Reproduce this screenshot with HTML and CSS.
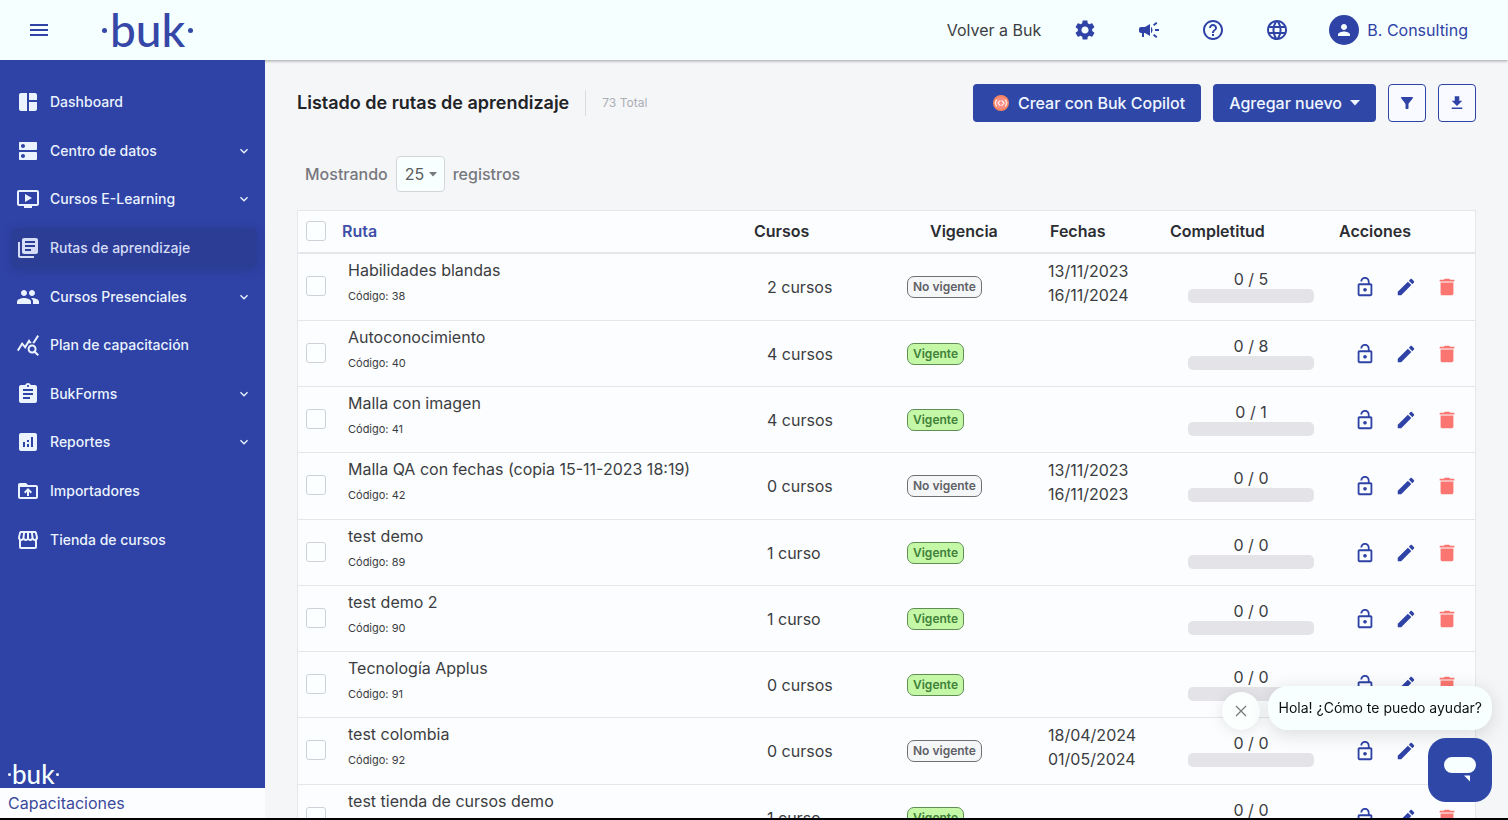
FILE: index.html
```html
<!DOCTYPE html>
<html lang="es">
<head>
<meta charset="utf-8">
<title>Listado de rutas de aprendizaje</title>
<link rel="stylesheet" href="styles.css">
</head>
<body>
<svg class="sprite" aria-hidden="true">
  <symbol id="i-menu" viewBox="0 0 24 24"><path d="M3 18h18v-2H3v2zm0-5h18v-2H3v2zm0-7v2h18V6H3z"/></symbol>
  <symbol id="i-dash" viewBox="0 0 24 24"><path d="M11 21H5c-1.100 0-2-.9-2-2V5c0-1.100.9-2 2-2h6v18zm2 0h6c1.100 0 2-.9 2-2v-7h-8v9zm8-11V5c0-1.100-.9-2-2-2h-6v7h8z"/></symbol>
  <symbol id="i-dns" viewBox="0 0 24 24"><path d="M20 13H4c-.55 0-1 .45-1 1v6c0 .55.45 1 1 1h16c.55 0 1-.45 1-1v-6c0-.55-.45-1-1-1zM7 19c-1.100 0-2-.9-2-2s.9-2 2-2 2 .9 2 2-.9 2-2 2zM20 3H4c-.55 0-1 .45-1 1v6c0 .55.45 1 1 1h16c.55 0 1-.45 1-1V4c0-.55-.45-1-1-1zM7 9c-1.100 0-2-.9-2-2s.9-2 2-2 2 .9 2 2-.9 2-2 2z"/></symbol>
  <symbol id="i-video" viewBox="0 0 24 24"><path d="M21 3H3c-1.110 0-2 .89-2 2v12c0 1.100.89 2 2 2h5v2h8v-2h5c1.100 0 1.990-.9 1.990-2L23 5c0-1.110-.9-2-2-2zm0 14H3V5h18v12zm-5-6l-7 4V7z"/></symbol>
  <symbol id="i-books" viewBox="0 0 24 24"><path d="M4 6H2v14c0 1.100.9 2 2 2h14v-2H4V6zm16-4H8c-1.100 0-2 .9-2 2v12c0 1.100.9 2 2 2h12c1.100 0 2-.9 2-2V4c0-1.100-.9-2-2-2zm-1 9H9V9h10v2zm-4 4H9v-2h6v2zm4-8H9V5h10v2z"/></symbol>
  <symbol id="i-group" viewBox="0 0 24 24"><path d="M16 11c1.660 0 2.990-1.340 2.990-3S17.660 5 16 5c-1.660 0-3 1.340-3 3s1.340 3 3 3zm-8 0c1.660 0 2.990-1.340 2.990-3S9.660 5 8 5C6.340 5 5 6.340 5 8s1.340 3 3 3zm0 2c-2.330 0-7 1.170-7 3.500V19h14v-2.500c0-2.330-4.670-3.500-7-3.500zm8 0c-.29 0-.62.02-.97.05 1.160.84 1.970 1.970 1.970 3.450V19h6v-2.500c0-2.330-4.670-3.500-7-3.500z"/></symbol>
  <symbol id="i-stats" viewBox="0 0 24 24"><path d="M19.880 18.470c.44-.7.7-1.510.7-2.390 0-2.490-2.010-4.500-4.500-4.500s-4.500 2.010-4.500 4.500 2.010 4.500 4.490 4.500c.88 0 1.700-.26 2.390-.7L21.580 23 23 21.580l-3.120-3.110zm-3.800.11c-1.380 0-2.500-1.120-2.500-2.500s1.120-2.500 2.500-2.500 2.500 1.120 2.500 2.500-1.120 2.500-2.500 2.500zm-.36-8.500c-.74.02-1.450.18-2.100.45l-.55-.83-3.800 6.180-3.010-3.520-3.630 5.810L1 17l5-8 3 3.500L13 6l2.720 4.080zm2.590.5c-.64-.28-1.330-.45-2.050-.49L21.380 2 23 3.180l-4.690 7.400z"/></symbol>
  <symbol id="i-form" viewBox="0 0 24 24"><path d="M19 3h-4.180C14.400 1.840 13.300 1 12 1c-1.300 0-2.400.84-2.820 2H5c-1.100 0-2 .9-2 2v14c0 1.100.9 2 2 2h14c1.100 0 2-.9 2-2V5c0-1.100-.9-2-2-2zm-7 0c.55 0 1 .45 1 1s-.45 1-1 1-1-.45-1-1 .45-1 1-1zm2 14H7v-2h7v2zm3-4H7v-2h10v2zm0-4H7V7h10v2z"/></symbol>
  <symbol id="i-report" viewBox="0 0 24 24"><path d="M19 3H5c-1.100 0-2 .9-2 2v14c0 1.100.9 2 2 2h14c1.100 0 2-.9 2-2V5c0-1.100-.9-2-2-2zM9 17H7v-5h2v5zm4 0h-2v-3h2v3zm0-5h-2v-2h2v2zm4 5h-2V7h2v10z"/></symbol>
  <symbol id="i-upload" viewBox="0 0 24 24"><path d="M20 6h-8l-2-2H4c-1.100 0-1.990.9-1.990 2L2 18c0 1.100.9 2 2 2h16c1.100 0 2-.9 2-2V8c0-1.100-.9-2-2-2zm0 12H4V8h16v10zM9.410 14.420L11 12.840V17h2v-4.160l1.590 1.590L16 13.010 12.010 9 8 13.010l1.410 1.410z"/></symbol>
  <symbol id="i-store" viewBox="0 0 24 24"><path d="M21.900 8.890l-1.050-4.370c-.22-.9-1-1.520-1.910-1.520H5.050c-.9 0-1.690.63-1.900 1.520L2.100 8.890c-.24 1.020-.02 2.060.62 2.880.08.11.19.19.28.29V19c0 1.100.9 2 2 2h14c1.100 0 2-.9 2-2v-6.940c.09-.09.2-.18.28-.28.64-.82.87-1.870.62-2.890zm-2.990-3.900l1.050 4.370c.1.42.01.84-.25 1.170-.14.18-.44.47-.94.47-.61 0-1.140-.49-1.210-1.140L16.980 5l1.930-.01zM13 5h1.960l.54 4.520c.05.39-.07.78-.33 1.070-.22.26-.54.41-.95.41-.67 0-1.220-.59-1.220-1.310V5zM8.490 9.520L9.040 5H11v4.690c0 .72-.55 1.310-1.290 1.310-.34 0-.65-.15-.89-.41-.25-.29-.37-.68-.33-1.070zm-4.450-.16L5.050 5h1.970l-.58 4.860c-.08.65-.6 1.140-1.210 1.140-.49 0-.8-.29-.93-.47-.27-.32-.36-.75-.26-1.170zM5 19v-6.030c.08.01.15.03.23.03.87 0 1.660-.36 2.240-.95.6.6 1.400.95 2.310.95.87 0 1.650-.36 2.230-.93.59.57 1.390.93 2.290.93.84 0 1.640-.35 2.240-.95.58.59 1.370.95 2.240.95.08 0 .15-.02.23-.03V19H5z"/></symbol>
  <symbol id="i-chev" viewBox="0 0 24 24"><path d="M7.410 8.590L12 13.170l4.590-4.580L18 10l-6 6-6-6z"/></symbol>
  <symbol id="i-caret" viewBox="0 0 10 6"><path d="M0 0h10L5 5.500z"/></symbol>
  <symbol id="i-gear" viewBox="0 0 24 24"><path d="M19.140 12.940c.04-.3.06-.61.06-.94 0-.32-.02-.64-.07-.94l2.030-1.580c.18-.14.23-.41.12-.61l-1.920-3.320c-.12-.22-.37-.29-.59-.22l-2.390.96c-.5-.38-1.030-.7-1.620-.94l-.36-2.540c-.04-.24-.24-.41-.48-.41h-3.840c-.24 0-.43.17-.47.41l-.36 2.540c-.59.24-1.130.57-1.620.94l-2.390-.96c-.22-.08-.47 0-.59.22L2.740 8.870c-.12.21-.08.47.12.61l2.030 1.580c-.05.3-.09.63-.09.94s.02.64.07.94l-2.030 1.580c-.18.14-.23.41-.12.61l1.920 3.320c.12.22.37.29.59.22l2.390-.96c.5.38 1.030.7 1.620.94l.36 2.540c.05.24.24.41.48.41h3.840c.24 0 .44-.17.47-.41l.36-2.540c.59-.24 1.130-.56 1.620-.94l2.390.96c.22.08.47 0 .59-.22l1.920-3.320c.12-.22.07-.47-.12-.61l-2.010-1.580zM12 15.600c-1.980 0-3.600-1.620-3.600-3.600s1.620-3.600 3.600-3.600 3.600 1.620 3.600 3.600-1.620 3.600-3.600 3.600z"/></symbol>
  <symbol id="i-horn" viewBox="0 0 24 24"><path d="M18 11v2h4v-2h-4zM16 17.610c.96.71 2.210 1.650 3.200 2.390.4-.53.8-1.070 1.200-1.600-.99-.74-2.240-1.680-3.200-2.400-.4.54-.8 1.080-1.200 1.610zM20.400 5.600c-.4-.53-.8-1.070-1.200-1.600-.99.74-2.240 1.680-3.200 2.400.4.53.8 1.070 1.200 1.600.96-.72 2.210-1.650 3.200-2.400zM4 9c-1.100 0-2 .9-2 2v2c0 1.100.9 2 2 2h1v4h2v-4h1l5 3V6L8 9H4zm11.500 3c0-1.330-.58-2.530-1.500-3.350v6.690c.92-.81 1.500-2.010 1.500-3.340z"/></symbol>
  <symbol id="i-help" viewBox="0 0 24 24"><path d="M11 18h2v-2h-2v2zm1-16C6.480 2 2 6.480 2 12s4.480 10 10 10 10-4.480 10-10S17.520 2 12 2zm0 18c-4.410 0-8-3.590-8-8s3.590-8 8-8 8 3.590 8 8-3.590 8-8 8zm0-14c-2.210 0-4 1.790-4 4h2c0-1.100.9-2 2-2s2 .9 2 2c0 2-3 1.750-3 5h2c0-2.250 3-2.500 3-5 0-2.210-1.790-4-4-4z"/></symbol>
  <symbol id="i-globe" viewBox="0 0 24 24"><path d="M11.990 2C6.470 2 2 6.480 2 12s4.470 10 9.990 10C17.520 22 22 17.520 22 12S17.520 2 11.990 2zm6.930 6h-2.950c-.32-1.250-.78-2.450-1.380-3.560 1.840.63 3.370 1.910 4.330 3.560zM12 4.040c.83 1.200 1.480 2.530 1.910 3.960h-3.820c.43-1.430 1.080-2.760 1.910-3.960zM4.260 14C4.100 13.360 4 12.690 4 12s.1-1.360.26-2h3.380c-.08.66-.14 1.320-.14 2s.06 1.340.14 2H4.260zm.82 2h2.950c.32 1.250.78 2.450 1.380 3.560-1.840-.63-3.370-1.900-4.330-3.560zm2.950-8H5.080c.96-1.660 2.490-2.930 4.330-3.560C8.810 5.550 8.350 6.750 8.030 8zM12 19.960c-.83-1.200-1.480-2.530-1.910-3.960h3.820c-.43 1.430-1.080 2.760-1.910 3.960zM14.340 14H9.660c-.09-.66-.16-1.320-.16-2s.07-1.350.16-2h4.680c.09.65.16 1.320.16 2s-.07 1.340-.16 2zm.25 5.560c.6-1.110 1.060-2.310 1.380-3.560h2.950c-.96 1.650-2.490 2.930-4.330 3.560zM16.360 14c.08-.66.14-1.320.14-2s-.06-1.340-.14-2h3.380c.16.64.26 1.310.26 2s-.1 1.360-.26 2h-3.380z"/></symbol>
  <symbol id="i-person" viewBox="0 0 24 24"><path d="M12 12c2.210 0 4-1.790 4-4s-1.790-4-4-4-4 1.790-4 4 1.790 4 4 4zm0 2c-2.670 0-8 1.340-8 4v2h16v-2c0-2.660-5.330-4-8-4z"/></symbol>
  <symbol id="i-copilot" viewBox="0 0 18 18"><circle cx="9" cy="9" r="8" fill="#f7855f"/><circle cx="9" cy="9" r="6" fill="#fb8d86"/><g fill="none" stroke="#ffe9e2" stroke-width="1.300" stroke-linecap="round"><path d="M4.500 6C3 8 3 10 4.500 12M13.500 6C15 8 15 10 13.500 12M8 6.800L6 9l2 2.200M10 6.800L12 9l-2 2.200"/></g></symbol>
  <symbol id="i-filter" viewBox="0 0 24 24"><path d="M4.250 5.610C6.270 8.200 10 13 10 13v6c0 .55.45 1 1 1h2c.55 0 1-.45 1-1v-6s3.720-4.800 5.740-7.390c.51-.66.04-1.610-.79-1.610H5.040c-.83 0-1.300.95-.79 1.610z"/></symbol>
  <symbol id="i-down" viewBox="0 0 24 24"><path d="M19 9h-4V3H9v6H5l7 7 7-7zM5 18v2h14v-2H5z"/></symbol>
  <symbol id="i-lock" viewBox="0 0 24 24"><path d="M12 17c1.100 0 2-.9 2-2s-.9-2-2-2-2 .9-2 2 .9 2 2 2zm6-9h-1V6c0-2.760-2.240-5-5-5S7 3.240 7 6h1.900c0-1.710 1.390-3.100 3.100-3.100s3.100 1.390 3.100 3.100v2H6c-1.100 0-2 .9-2 2v10c0 1.100.9 2 2 2h12c1.100 0 2-.9 2-2V10c0-1.100-.9-2-2-2zm0 12H6V10h12v10z"/></symbol>
  <symbol id="i-edit" viewBox="0 0 24 24"><path d="M3 17.250V21h3.750L17.810 9.940l-3.750-3.750L3 17.250zM20.710 7.040c.39-.39.39-1.020 0-1.410l-2.340-2.340c-.39-.39-1.020-.39-1.410 0l-1.830 1.830 3.750 3.750 1.830-1.830z"/></symbol>
  <symbol id="i-trash" viewBox="0 0 24 24"><path d="M5 19c0 1.100.9 2 2 2h10c1.100 0 2-.9 2-2V7H5v12zM20 4h-4.500l-1-1h-5l-1 1H4v2h16V4z"/></symbol>
  <symbol id="i-close" viewBox="0 0 12 12"><path d="M1 1l10 10M11 1L1 11" fill="none" stroke="#777" stroke-width="1.200"/></symbol>
  <symbol id="i-chat" viewBox="0 0 32 26"><path d="M8 0h16a8 8 0 0 1 0 16H8A8 8 0 0 1 8 0zM20 18.500h6v6z"/></symbol>
</svg>

<div class="app">
  <header class="topbar">
    <button class="plain menu" aria-label="Menú"><svg class="ic"><use href="#i-menu"/></svg></button>
    <a class="logo" href="#" aria-label="buk"><i></i><span>buk</span><i></i></a>
    <nav class="topnav">
      <a class="back" href="#">Volver a Buk</a>
      <button class="plain" aria-label="Configuración"><svg class="ic"><use href="#i-gear"/></svg></button>
      <button class="plain" aria-label="Novedades"><svg class="ic"><use href="#i-horn"/></svg></button>
      <button class="plain" aria-label="Ayuda"><svg class="ic"><use href="#i-help"/></svg></button>
      <button class="plain" aria-label="Idioma"><svg class="ic"><use href="#i-globe"/></svg></button>
      <a class="user" href="#"><span class="avatar"><svg><use href="#i-person"/></svg></span>B. Consulting</a>
    </nav>
  </header>

  <aside class="side">
    <ul class="menu-list">
      <li><a href="#"><svg class="ic"><use href="#i-dash"/></svg><span>Dashboard</span></a></li>
      <li><a href="#"><svg class="ic"><use href="#i-dns"/></svg><span>Centro de datos</span><svg class="chev"><use href="#i-chev"/></svg></a></li>
      <li><a href="#"><svg class="ic"><use href="#i-video"/></svg><span>Cursos E-Learning</span><svg class="chev"><use href="#i-chev"/></svg></a></li>
      <li><a class="active" href="#"><svg class="ic"><use href="#i-books"/></svg><span>Rutas de aprendizaje</span></a></li>
      <li><a href="#"><svg class="ic"><use href="#i-group"/></svg><span>Cursos Presenciales</span><svg class="chev"><use href="#i-chev"/></svg></a></li>
      <li><a href="#"><svg class="ic"><use href="#i-stats"/></svg><span>Plan de capacitación</span></a></li>
      <li><a href="#"><svg class="ic"><use href="#i-form"/></svg><span>BukForms</span><svg class="chev"><use href="#i-chev"/></svg></a></li>
      <li><a href="#"><svg class="ic"><use href="#i-report"/></svg><span>Reportes</span><svg class="chev"><use href="#i-chev"/></svg></a></li>
      <li><a href="#"><svg class="ic"><use href="#i-upload"/></svg><span>Importadores</span></a></li>
      <li><a href="#"><svg class="ic"><use href="#i-store"/></svg><span>Tienda de cursos</span></a></li>
    </ul>
    <div class="logo small"><i></i><span>buk</span><i></i></div>
    <div class="product">Capacitaciones</div>
  </aside>

  <main class="main">
    <div class="head">
      <h1>Listado de rutas de aprendizaje</h1>
      <span class="total">73 Total</span>
      <div class="tools">
        <button class="btn copilot"><svg><use href="#i-copilot"/></svg>Crear con Buk Copilot</button>
        <button class="btn">Agregar nuevo<svg class="caret"><use href="#i-caret"/></svg></button>
        <button class="btn outline" aria-label="Filtrar"><svg><use href="#i-filter"/></svg></button>
        <button class="btn outline" aria-label="Descargar"><svg><use href="#i-down"/></svg></button>
      </div>
    </div>
    <div class="length">
      <label for="len">Mostrando</label>
      <span class="select"><select id="len"><option>25</option><option>50</option></select><svg><use href="#i-caret"/></svg></span>
      <span>registros</span>
    </div>
    <table class="routes">
      <colgroup><col class="c-check"><col><col class="c-courses"><col class="c-state"><col class="c-dates"><col class="c-progress"><col class="c-actions"></colgroup>
      <thead>
        <tr><th class="check"><input type="checkbox" aria-label="Seleccionar todo"></th><th class="sorted">Ruta</th><th>Cursos</th><th class="th-state">Vigencia</th><th>Fechas</th><th>Completitud</th><th>Acciones</th></tr>
      </thead>
      <tbody>
        <tr class="dated"><td class="check"><input type="checkbox" aria-label="Habilidades blandas"></td><td class="name">Habilidades blandas<small>Código: 38</small></td><td class="courses">2 cursos</td><td class="state"><span class="pill">No vigente</span></td><td class="dates">13/11/2023<br>16/11/2024</td><td class="progress">0 / 5<div class="bar"></div></td><td class="actions"><div><button class="plain" aria-label="Desbloquear"><svg><use href="#i-lock"/></svg></button><button class="plain" aria-label="Editar"><svg><use href="#i-edit"/></svg></button><button class="plain del" aria-label="Eliminar"><svg><use href="#i-trash"/></svg></button></div></td></tr>
        <tr><td class="check"><input type="checkbox" aria-label="Autoconocimiento"></td><td class="name">Autoconocimiento<small>Código: 40</small></td><td class="courses">4 cursos</td><td class="state"><span class="pill on">Vigente</span></td><td class="dates"></td><td class="progress">0 / 8<div class="bar"></div></td><td class="actions"><div><button class="plain" aria-label="Desbloquear"><svg><use href="#i-lock"/></svg></button><button class="plain" aria-label="Editar"><svg><use href="#i-edit"/></svg></button><button class="plain del" aria-label="Eliminar"><svg><use href="#i-trash"/></svg></button></div></td></tr>
        <tr><td class="check"><input type="checkbox" aria-label="Malla con imagen"></td><td class="name">Malla con imagen<small>Código: 41</small></td><td class="courses">4 cursos</td><td class="state"><span class="pill on">Vigente</span></td><td class="dates"></td><td class="progress">0 / 1<div class="bar"></div></td><td class="actions"><div><button class="plain" aria-label="Desbloquear"><svg><use href="#i-lock"/></svg></button><button class="plain" aria-label="Editar"><svg><use href="#i-edit"/></svg></button><button class="plain del" aria-label="Eliminar"><svg><use href="#i-trash"/></svg></button></div></td></tr>
        <tr class="dated"><td class="check"><input type="checkbox" aria-label="Malla QA con fechas"></td><td class="name">Malla QA con fechas (copia 15-11-2023 18:19)<small>Código: 42</small></td><td class="courses">0 cursos</td><td class="state"><span class="pill">No vigente</span></td><td class="dates">13/11/2023<br>16/11/2023</td><td class="progress">0 / 0<div class="bar"></div></td><td class="actions"><div><button class="plain" aria-label="Desbloquear"><svg><use href="#i-lock"/></svg></button><button class="plain" aria-label="Editar"><svg><use href="#i-edit"/></svg></button><button class="plain del" aria-label="Eliminar"><svg><use href="#i-trash"/></svg></button></div></td></tr>
        <tr><td class="check"><input type="checkbox" aria-label="test demo"></td><td class="name">test demo<small>Código: 89</small></td><td class="courses">1 curso</td><td class="state"><span class="pill on">Vigente</span></td><td class="dates"></td><td class="progress">0 / 0<div class="bar"></div></td><td class="actions"><div><button class="plain" aria-label="Desbloquear"><svg><use href="#i-lock"/></svg></button><button class="plain" aria-label="Editar"><svg><use href="#i-edit"/></svg></button><button class="plain del" aria-label="Eliminar"><svg><use href="#i-trash"/></svg></button></div></td></tr>
        <tr><td class="check"><input type="checkbox" aria-label="test demo 2"></td><td class="name">test demo 2<small>Código: 90</small></td><td class="courses">1 curso</td><td class="state"><span class="pill on">Vigente</span></td><td class="dates"></td><td class="progress">0 / 0<div class="bar"></div></td><td class="actions"><div><button class="plain" aria-label="Desbloquear"><svg><use href="#i-lock"/></svg></button><button class="plain" aria-label="Editar"><svg><use href="#i-edit"/></svg></button><button class="plain del" aria-label="Eliminar"><svg><use href="#i-trash"/></svg></button></div></td></tr>
        <tr><td class="check"><input type="checkbox" aria-label="Tecnología Applus"></td><td class="name">Tecnología Applus<small>Código: 91</small></td><td class="courses">0 cursos</td><td class="state"><span class="pill on">Vigente</span></td><td class="dates"></td><td class="progress">0 / 0<div class="bar"></div></td><td class="actions"><div><button class="plain" aria-label="Desbloquear"><svg><use href="#i-lock"/></svg></button><button class="plain" aria-label="Editar"><svg><use href="#i-edit"/></svg></button><button class="plain del" aria-label="Eliminar"><svg><use href="#i-trash"/></svg></button></div></td></tr>
        <tr class="dated"><td class="check"><input type="checkbox" aria-label="test colombia"></td><td class="name">test colombia<small>Código: 92</small></td><td class="courses">0 cursos</td><td class="state"><span class="pill">No vigente</span></td><td class="dates">18/04/2024<br>01/05/2024</td><td class="progress">0 / 0<div class="bar"></div></td><td class="actions"><div><button class="plain" aria-label="Desbloquear"><svg><use href="#i-lock"/></svg></button><button class="plain" aria-label="Editar"><svg><use href="#i-edit"/></svg></button><button class="plain del" aria-label="Eliminar"><svg><use href="#i-trash"/></svg></button></div></td></tr>
        <tr><td class="check"><input type="checkbox" aria-label="test tienda de cursos demo"></td><td class="name">test tienda de cursos demo</td><td class="courses">1 curso</td><td class="state"><span class="pill on">Vigente</span></td><td class="dates"></td><td class="progress">0 / 0<div class="bar"></div></td><td class="actions"><div><button class="plain" aria-label="Desbloquear"><svg><use href="#i-lock"/></svg></button><button class="plain" aria-label="Editar"><svg><use href="#i-edit"/></svg></button><button class="plain del" aria-label="Eliminar"><svg><use href="#i-trash"/></svg></button></div></td></tr>
      </tbody>
    </table>
  </main>
</div>

<div class="chat">
  <div class="chat-row">
    <button class="chat-close" aria-label="Cerrar"><svg><use href="#i-close"/></svg></button>
    <div class="chat-msg">Hola! ¿Cómo te puedo ayudar?</div>
  </div>
  <button class="chat-open" aria-label="Abrir chat"><svg><use href="#i-chat"/></svg></button>
</div>
</body>
</html>
```
FILE: styles.css
```css
* { box-sizing: border-box; }
body {
  margin: 0;
  font: 400 16px/24px Inter, "Liberation Sans", sans-serif;
  color: #3c3d42;
  background: #f5f6f8;
}
a { color: inherit; text-decoration: none; }
button, select { font: inherit; }
svg { display: block; fill: currentColor; }
.sprite { position: absolute; width: 0; height: 0; }
.ic { width: 24px; height: 24px; flex: none; }
.plain { padding: 0; border: 0; background: none; color: #2f42a5; cursor: pointer; }

.app {
  display: grid;
  grid-template: 60px minmax(0, 1fr) / 265px minmax(0, 1fr);
  height: 100vh;
  border-bottom: 2px solid #000;
  overflow: hidden;
}

/* Top bar */
.topbar {
  grid-column: 1 / -1;
  z-index: 1;
  display: flex;
  align-items: center;
  padding: 0 40px 0 27px;
  background: #f5ffff;
  box-shadow: 0 1px 3px rgba(0, 0, 0, .35);
}
.logo {
  display: flex;
  align-items: center;
  gap: 3px;
  margin-left: 51px;
  font: 500 46px/56px Lato, sans-serif;
  color: #3548a8;
}
.logo i { width: 5px; height: 5px; border-radius: 50%; background: currentColor; }
.topnav { display: flex; align-items: center; gap: 40px; margin-left: auto; color: #2f42a5; }
.back { margin-right: -8px; color: #3c3d42; }
.user { display: flex; align-items: center; gap: 8px; }
.avatar {
  display: grid;
  place-items: center;
  width: 30px;
  height: 30px;
  border-radius: 50%;
  background: #2f42a5;
  color: #f5ffff;
}
.avatar svg { width: 18px; height: 18px; }

/* Sidebar */
.side {
  z-index: 2;
  display: flex;
  flex-direction: column;
  min-height: 0;
  background: #2f42a5;
  color: #eaf3ff;
}
.menu-list {
  display: grid;
  grid-auto-rows: 1fr;
  height: 486px;
  margin: 18px 8px 0 12px;
  padding: 0;
  list-style: none;
  font-size: 14px;
  font-weight: 500;
}
.menu-list li { display: grid; align-items: center; }
.menu-list a { display: flex; align-items: center; gap: 10px; height: 40px; padding: 0 5px 0 4px; border-radius: 6px; }
.menu-list .active { background: #2c3d96; box-shadow: 0 2px 8px #2a3b92; color: #d5dcf6; }
.chev { width: 16px; height: 16px; margin-left: auto; }
.logo.small { gap: 1px; margin: auto 0 0 8px; font-size: 26px; line-height: 28px; color: #f5ffff; }
.logo.small i { width: 3px; height: 3px; }
.product { padding: 3px 8px; background: #fbfdff; color: #3c4a9c; }

/* Content */
.main { min-height: 0; overflow: hidden; padding: 24px 32px 0; }
.head { display: flex; align-items: center; min-height: 38px; }
h1 { margin: 0; font-size: 18px; font-weight: 600; line-height: 28px; color: #222327; }
.total { margin-left: 16px; padding-left: 16px; border-left: 1px solid #dcdde2; font-size: 12px; line-height: 26px; color: #acadb5; }
.tools { display: flex; gap: 12px; margin-left: auto; }
.btn {
  display: flex;
  align-items: center;
  gap: 8px;
  height: 38px;
  padding: 0 16px;
  border: 0;
  border-radius: 4px;
  background: #2f48a8;
  color: #f0f6ff;
  font-weight: 500;
}
.btn svg { width: 18px; height: 18px; }
.btn .caret { width: 10px; height: 6px; }
.copilot { padding-left: 19px; }
.btn.outline { width: 38px; padding: 0; justify-content: center; border: 1px solid #2f42a5; background: #f8faff; color: #2f42a5; }
.length { display: flex; align-items: center; gap: 8px; margin: 34px 8px 18px; font-weight: 500; color: #77787e; }
.select { display: grid; position: relative; }
.select select {
  appearance: none;
  width: 49px;
  height: 36px;
  padding: 0 8px;
  border: 1px solid #d5d6dc;
  border-radius: 4px;
  background: #f8ffff;
  font-weight: 400;
  color: #5a5b61;
}
.select svg { position: absolute; right: 8px; top: 16px; width: 8px; height: 5px; pointer-events: none; }

.routes {
  width: 100%;
  table-layout: fixed;
  border-collapse: separate;
  border-spacing: 0;
  border: 1px solid #e6e7eb;
  background: #fbfdfe;
}
.c-check { width: 44px; }
.c-courses { width: 152px; }
.c-state { width: 144px; }
.c-dates { width: 120px; }
.c-progress { width: 169px; }
.c-actions { width: 148px; }
.routes th {
  height: 43px;
  padding: 0 12px 2px;
  border-bottom: 2px solid #e4e6e9;
  text-align: left;
  font-weight: 600;
  color: #2c2d32;
}
.routes td { height: 66px; padding: 0; border-bottom: 1px solid #e4e6e9; }
.routes .dated td { height: 67px; }
.routes td.check { padding: 0 8px 2px; }
.routes th.check { padding: 0 8px 2px; }
.routes .sorted { padding-left: 0; color: #3f4fa8; }
.routes .th-state { padding-left: 36px; }
.check input { appearance: none; display: block; width: 20px; height: 20px; margin: 0; border: 1px solid #cfd1d9; border-radius: 3px; background: #fcffff; }
.routes .name { padding: 4px 0 0 6px; vertical-align: top; }
.name small { display: block; margin-top: 2px; font-size: 11px; }
.routes .courses { padding-left: 25px; }
.routes .state { padding-left: 13px; }
.pill {
  display: block;
  width: max-content;
  padding: 0 5px;
  border: 1px solid #6f7076;
  border-radius: 7px;
  background: #f5f6f8;
  font-size: 12px;
  font-weight: 600;
  line-height: 20px;
  color: #606167;
}
.pill.on { border-color: #5f8f55; background: #c5f8a6; color: #40803a; }
.routes .dates { padding: 5px 0 0 10px; vertical-align: top; }
.routes .progress { padding: 15px 13px 0 30px; vertical-align: top; line-height: 20px; text-align: center; }
.bar { height: 14px; border-radius: 5px; background: #e4e4e8; }
.routes .actions { padding-left: 27px; }
.actions div { display: flex; gap: 19px; }
.actions svg { width: 22px; height: 22px; }
.actions .del { color: #fb7670; }

/* Chat widget */
.chat {
  position: fixed;
  right: 16px;
  bottom: 18px;
  z-index: 3;
  display: grid;
  justify-items: end;
  gap: 8px;
}
.chat-row { display: flex; align-items: end; gap: 8px; }
.chat-close {
  display: grid;
  place-items: center;
  width: 38px;
  height: 38px;
  padding: 0;
  border: 0;
  border-radius: 50%;
  background: #fbfffe;
  box-shadow: 0 2px 14px rgba(0, 0, 0, .1);
}
.chat-close svg { width: 12px; height: 12px; }
.chat-msg {
  padding: 10px;
  border-radius: 20px;
  background: #f8ffff;
  box-shadow: 0 4px 20px rgba(0, 0, 0, .14);
  font-size: 14px;
  color: #111;
}
.chat-open {
  display: grid;
  place-items: center;
  width: 64px;
  height: 64px;
  padding: 0;
  border: 0;
  border-radius: 18px;
  background: #2f48a8;
  color: #f8ffff;
}
.chat-open svg { width: 32px; height: 26px; }
```
